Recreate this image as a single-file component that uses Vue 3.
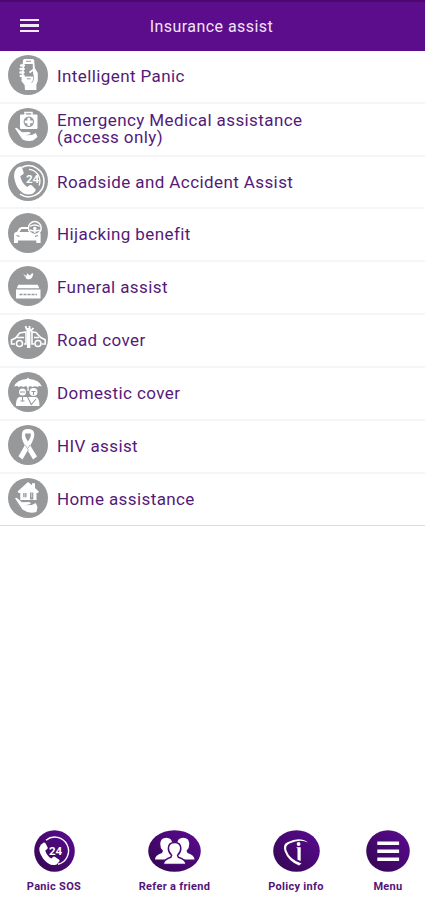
<script setup>
const items = [
  { icon: 'phone', label: 'Intelligent Panic', width: 124 },
  { icon: 'medical', label: 'Emergency Medical assistance', second: '(access only)', width: 241 },
  { icon: 'call', label: 'Roadside and Accident Assist' },
  { icon: 'hijack', label: 'Hijacking benefit' },
  { icon: 'funeral', label: 'Funeral assist' },
  { icon: 'road', label: 'Road cover' },
  { icon: 'domestic', label: 'Domestic cover' },
  { icon: 'ribbon', label: 'HIV assist' },
  { icon: 'home', label: 'Home assistance' },
]
</script>

<template>
  <main class="screen">
    <header class="topbar">
      <button class="burger" aria-label="Open menu"><i></i><i></i><i></i></button>
      <h1>Insurance assist</h1>
    </header>

    <ul class="list">
      <li v-for="item in items" :key="item.icon" class="row">
        <svg class="badge" viewBox="0 0 40 40" aria-hidden="true">
          <circle cx="20" cy="20" r="20" fill="#96989a" />
          <g v-if="item.icon === 'phone'">
            <path d="M15 5.5q0-1.5 1.5-1.5h8q1.5 0 1.7 1.5l.6 7.5 3 5v8l-1.4 3.5V35H17l-.4-5-3.2-4z" fill="#fff" />
            <path d="M16 9h8.7l.6 12.5H15.5z" fill="#96989a" />
            <path d="M18 6.3h5M19 23.8h3.5" stroke="#96989a" stroke-width="1" />
            <path d="M13 10.5h3M12.5 14h3.3M12.3 17.5h3.3M12.7 21h3" stroke="#fff" stroke-width="2.3" stroke-linecap="round" />
            <path d="M21.5 17.5l5-3.5" stroke="#fff" stroke-width="2" />
            <path d="M25.5 20v5l-2 3" fill="none" stroke="#96989a" stroke-width=".7" />
          </g>
          <g v-else-if="item.icon === 'medical'">
            <path d="M17 7V4.5h7V7" fill="none" stroke="#fff" stroke-width="1.5" />
            <rect x="12" y="6.5" width="17.5" height="14.5" rx="1" fill="#fff" />
            <circle cx="20.8" cy="13.8" r="5.2" fill="#96989a" />
            <path d="M20.8 9.8v8M16.8 13.8h8" stroke="#fff" stroke-width="2.8" />
            <path d="M7 20.2q1.3-1 2.5.2l4.5 3.8 7-.2q2 .3 1.5 2l-5 1.2 6.3-.1 4-2 1.7 3.8-4.5 3.7q-5.5 1-10.5-1.2z" fill="#fff" />
          </g>
          <g v-else-if="item.icon === 'call'">
            <path d="M14 6.2A15.5 15.5 0 1 1 12 33.2" fill="none" stroke="#fff" stroke-width="1.5" />
            <path d="M21 8.3A11.8 11.8 0 0 1 31 24.5" fill="none" stroke="#fff" stroke-width="1.3" />
            <path d="M9.2 6.8l3-1.3q1.2-.2 1.8 1l1.7 5.2q.2 1.2-.8 1.8l-2.6 1.4q1 7 7 11l2.4-1.8q1-.5 2 .2l3.8 4q.6 1-.3 2L25 32.5Q15.5 36 9.2 26 3 13 9.2 6.8z" fill="#fff" />
            <text x="18" y="22" class="num grey-num">24</text>
          </g>
          <g v-else-if="item.icon === 'hijack'">
            <path d="M6 30V21q.2-1.8 3-2.2l2-3.3q1-1.5 2.7-1.5h12q1.5 0 2.5 1.6l2 3q2.4.4 2.4 2.4v9h-4.3v-2.5H10V30z" fill="#fff" />
            <path d="M11.5 19l1.8-3h12l1.7 3z" fill="#96989a" />
            <path d="M8.5 22.5l3 .8M30 22.5l-3 .8" stroke="#96989a" stroke-width="1.2" />
            <circle cx="26.8" cy="15" r="6.4" fill="#96989a" stroke="#fff" stroke-width="1.5" />
            <path d="M22 13.5q4.8-3 9.6 0M22 17q4.8 2 9.6 0M26.8 14v6" fill="none" stroke="#fff" stroke-width="1.4" />
            <circle cx="26.8" cy="15.5" r="1.8" fill="#fff" />
          </g>
          <g v-else-if="item.icon === 'funeral'">
            <path d="M15.5 8q2 2 3.5 1.5L18.8 7l3 2.5L24 7.2l1.3.2-.5 2.3q-1 4-5.5 3.6l-2-1.5 1-.9q-2.3-.5-2.8-2.7z" fill="#fff" />
            <path d="M10.3 18.8h19.5l1.5 3.5H8.8z" fill="#fff" />
            <rect x="8" y="23.5" width="24.5" height="9" fill="#fff" />
            <path d="M11.5 28.5h17.5" stroke="#96989a" stroke-width="1.3" stroke-dasharray="3 1" />
          </g>
          <g v-else-if="item.icon === 'road'" fill="none" stroke="#fff" stroke-width="1.6">
            <path d="M7 25H3.5v-4l4-2 4.2-5 6.3-1v12h-2" />
            <path d="M34 25h3.2v-4.3l-4.5-2.2-4.7-5-4-.5v12h2" />
            <path d="M9 18.5h7M26 18.5h5" />
            <circle cx="11.5" cy="24.5" r="3" /><circle cx="30" cy="24.5" r="3" />
            <path d="M20.7 9v20" stroke-width="3.4" />
            <path d="M17.5 7l1.2 3.5 4.3 1.2L25.5 9M21.5 7v4" stroke-width="1.8" />
          </g>
          <g v-else-if="item.icon === 'domestic'">
            <path d="M6.2 14.5Q8.5 7.8 18.7 7l1.3-1.5L21.3 7Q31 7.5 34 14.5q-3-1-4.5.5-2.5-1.5-5 0-2.5-1.5-4.5 0-2.5-1.5-4.5 0-2.5-1.5-4.7 0-1.6-1.5-4.6-.5z" fill="#fff" />
            <path d="M8 34q-.3-7 3-9h17q3.5 1 3.5 9z" fill="#fff" />
            <circle cx="14.5" cy="20" r="3.5" fill="#fff" /><circle cx="25.5" cy="20" r="4" fill="#fff" />
            <path d="M20 12v7" stroke="#fff" stroke-width="1.3" />
            <path d="M12 20h5M23.5 19.5h4M25.5 19.5V23M14.5 24v5M19.5 25l4 8M28 27l-5 6M12.5 29h4" stroke="#96989a" stroke-width="1.1" />
          </g>
          <g v-else-if="item.icon === 'ribbon'">
            <path d="M14 9q0-5 6-5t6.3 5q0 5-4 11.5l6.7 11-4 3-5.3-9-5.2 9-4-3.3 6.3-11Q13 14 14 9z" fill="#fff" />
            <path d="M17.2 8.5h5.5q.8 3-2.8 8-3.4-5-2.7-8z" fill="#96989a" />
            <path d="M17.5 20.3l3 5.2M22 20l-1.8 3" stroke="#96989a" stroke-width=".7" />
          </g>
          <g v-else>
            <path d="M9.5 13.5L20 4l4 3.3V5.2h3v4.7l4 3.8-1.2 1.2h-1.3v7H12.3v-7h-1.6z" fill="#fff" />
            <path d="M15.2 15h3.3v4.3h-3.3zM22 14.5h3.3v7H22z" fill="#96989a" />
            <path d="M16.8 15v4M23.7 14.5v5" stroke="#fff" stroke-width=".6" />
            <path d="M7 20.2q1.3-1 2.5.2l4.5 3.8 7-.2q2 .3 1.5 2l-5 1.2 6.3-.1 4-2 1.7 3.8-1 5.2q-8 2-14-2.5z" fill="#fff" />
          </g>
        </svg>
        <span class="label">{{ item.label }}<template v-if="item.second"><br />{{ item.second }}</template></span>
      </li>
    </ul>

    <nav class="tabs">
      <a class="tab sos">
        <svg width="41" height="42" viewBox="0 0 41 42" aria-hidden="true">
          <defs><linearGradient id="purple" x1="0" y1="1" x2="1" y2="0"><stop offset="0" stop-color="#32064f" /><stop offset="1" stop-color="#5c0b93" /></linearGradient></defs>
          <ellipse cx="20.5" cy="21" rx="20.3" ry="20.8" fill="url(#purple)" />
          <path d="M12 10.2A13.8 13.8 0 1 1 24 34.3" fill="none" stroke="#fff" stroke-width="1.4" />
          <path d="M6.8 14.8l3-2.2q1-.3 1.7.7l2.2 4.3q.2 1.1-.7 1.7l-1.7 1.3q1.2 5 6 8l2-1.8q.9-.5 1.8.1l4.1 2.8q.9.9.1 1.8l-2.7 3Q15.5 37 9 28.5 3 20 6.8 14.8z" fill="#fff" />
          <text x="15" y="24.6" class="num">24</text>
        </svg>
        <span>Panic SOS</span>
      </a>
      <a class="tab friend">
        <svg width="53" height="42" viewBox="0 0 53 42" aria-hidden="true">
          <ellipse cx="26.5" cy="21" rx="26.3" ry="20.8" fill="url(#purple)" />
          <g fill="#fff">
            <path id="friend-side" d="M7 29.5q0-4.5 7-6.5l1-2.2q-3-3-2.8-7 .3-6 6-6 6 0 6 6.2L23 20l3 9.5z" />
            <path d="M46.5 29.5q0-4.5-7-6.5l-1-2.2q3-3 2.8-7-.3-6-6-6-6 0-6 6.2L30.500 20l-3 9.500z" />
          </g>
          <path d="M15.300 34.500q0-5 7.500-7.200l.8-2q-3.500-3.500-3.200-7.300.3-5.500 6.200-5.500t6.200 5.500q.3 3.800-3.200 7.300l.8 2q7.700 2.200 7.700 7.200z" fill="#fff" stroke="#4b0878" stroke-width="1.500" />
        </svg>
        <span>Refer a friend</span>
      </a>
      <a class="tab info">
        <svg width="47" height="42" viewBox="0 0 47 42" aria-hidden="true">
          <ellipse cx="23.500" cy="21" rx="23.300" ry="20.800" fill="url(#purple)" />
          <path d="M35 12.500Q27 6 14.500 12.200 9.500 14 11.500 21q3.500 10 14.500 14.500l2.500-2q-12-4-15-13-1.500-5 3-7Q27 8.500 35 12.500z" fill="#fff" />
          <path d="M23.200 17.300h4.500V31l-3.200-1.200v-11z" fill="#fff" />
          <circle cx="25.600" cy="14" r="1.900" fill="#fff" />
        </svg>
        <span>Policy info</span>
      </a>
      <a class="tab menu">
        <svg width="44" height="42" viewBox="0 0 44 42" aria-hidden="true">
          <ellipse cx="22" cy="21" rx="21.800" ry="20.800" fill="url(#purple)" />
          <path d="M11.300 13.300h21.800M11.300 21.300h21.800M11.300 29.300h21.800" stroke="#fff" stroke-width="3.500" />
        </svg>
        <span>Menu</span>
      </a>
    </nav>
  </main>
</template>

<style>
body { background: #fff; }
</style>

<style scoped>
.screen {
  display: flex;
  flex-direction: column;
  width: 100%;
  height: 900px;
  overflow: hidden;
  background: #fff;
  font-family: Roboto, sans-serif;
}
.topbar {
  display: grid;
  grid-template-columns: 58px 1fr 60px;
  align-items: center;
  flex: none;
  height: 51px;
  box-sizing: border-box;
  border-top: 2px solid #4d0870;
  background: #5c0d8b;
}
.burger {
  display: flex;
  flex-direction: column;
  gap: 3px;
  width: 19px;
  margin: 0 0 2px 20px;
  padding: 0;
  border: 0;
  background: none;
}
.burger i { height: 2.500px; background: #f4e9f8; }
h1 {
  margin: 0;
  color: #f1e4f6;
  font-size: 16px;
  font-weight: 400;
  letter-spacing: .45px;
  text-align: center;
}
.list { flex: none; margin: 0; padding: 0; list-style: none; }
.row {
  display: flex;
  align-items: center;
  gap: 9px;
  box-sizing: border-box;
  height: 52.830px;
  padding: 0 8px 3px;
  border-bottom: 2px solid #f6f6f6;
}
.row:last-child { border-bottom: 1px solid #dcdcdc; padding-bottom: 4px; }
.badge { flex: none; width: 40px; height: 40px; }
.label {
  padding-top: 3px;
  color: #551a78;
  font-size: 17px;
  line-height: 17px;
  letter-spacing: .4px;
  white-space: nowrap;
}
.num { fill: #fff; font: 700 11.500px Roboto, sans-serif; letter-spacing: -.2px; }
.tabs {
  display: flex;
  align-items: flex-start;
  margin-top: auto;
  height: 70px;
  flex: none;
}
.tab {
  display: flex;
  flex-direction: column;
  align-items: center;
  gap: 8px;
  color: #541379;
  font-size: 11px;
  font-weight: 700;
  line-height: 14px;
  letter-spacing: .3px;
  white-space: nowrap;
}
.tab svg { display: block; flex: none; }
.sos { width: 108px; }
.friend { width: 133px; }
.info { width: 110px; }
.menu { width: 74px; }
</style>
